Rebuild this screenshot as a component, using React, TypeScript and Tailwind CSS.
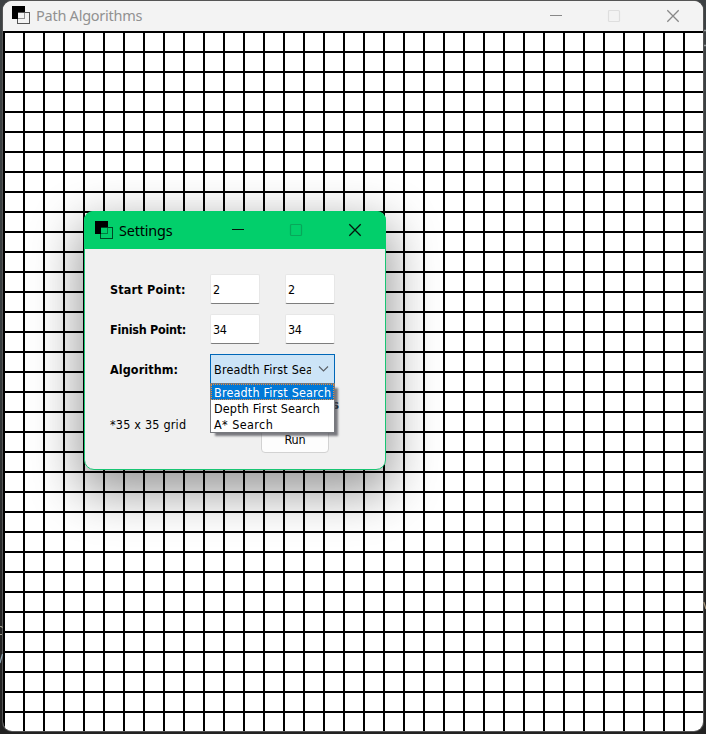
import type { ReactNode } from "react";

const UI = "font-['DejaVu_Sans_Condensed','DejaVu_Sans',sans-serif] font-stretch-condensed";
const TITLE = "font-['Noto_Sans','Open_Sans',sans-serif]";

function AppIcon() {
  return (
    <svg width="19" height="19" viewBox="0 0 19 19" className="shrink-0" shapeRendering="crispEdges">
      <path d="M0 0h13v6H6v7H0z" fill="#000" />
      <path d="M5.5 6.5h12v11h-12z" fill="none" stroke="#000" strokeOpacity="0.65" />
      <path d="M12.5 7v5.5H6" fill="none" stroke="#000" strokeOpacity="0.4" />
    </svg>
  );
}

function WindowButtons({ color, disabled }: { color: string; disabled: string }) {
  return (
    <svg width="130" height="14" viewBox="0 0 130 14" fill="none" className="shrink-0">
      <path d="M0 6.5h12" stroke={color} />
      <rect x="58.5" y="1.5" width="11" height="11" rx="1" stroke={disabled} strokeWidth="1.2" />
      <path d="M117.3 1.3l11.4 11.4M128.7 1.3l-11.4 11.4" stroke={color} strokeWidth="1.3" />
    </svg>
  );
}

function Label({ children, spacing }: { children: ReactNode; spacing: string }) {
  return <div className={`w-[100px] pt-[2px] text-[12.5px] font-bold whitespace-nowrap ${spacing}`}>{children}</div>;
}

function Field({ value }: { value: string }) {
  return (
    <input
      readOnly
      value={value}
      className="block h-[30px] w-[50px] rounded-[2px] border border-[#e7e7e7] border-b-[#7d7d7d] bg-white pl-[2px] text-[12.5px] tracking-[-0.3px] outline-none"
    />
  );
}

export default function App() {
  return (
    <div className="relative h-[734px] w-[706px] overflow-hidden bg-[linear-gradient(#3d4143_0px,#363b3d_350px,#222_600px,#222_734px)]">
      <svg className="absolute left-0 top-[620px]" width="3" height="50" fill="none" strokeWidth="1.2">
        <path d="M0 6.5h1.5l1 1.5M0 14.5h2" stroke="#9c9a8b" />
        <path d="M2.5 34L0 43" stroke="#8ca2b0" />
      </svg>
      <svg className="absolute left-[703px] top-[600px]" width="3" height="12" fill="none">
        <path d="M0.8 2L3 9" stroke="#a99a80" strokeWidth="1.2" />
      </svg>
      <svg className="absolute left-[703px] top-[28px]" width="3" height="20" fill="none">
        <path d="M1 2.5h2M1 17.5h2" stroke="#999d9f" strokeWidth="1.4" />
      </svg>
      <div className="pt-px pl-[3px]">
        <div className="h-[730px] w-[700px] overflow-hidden rounded-[9px] bg-white shadow-[0_0_0_1px_#555555]">
          <header className={`flex h-[30px] items-center bg-[#f3f3f3] pl-[9px] ${TITLE}`}>
            <span className="-mt-px"><AppIcon /></span>
            <span className="-mt-[2px] ml-[5px] w-[511px] text-[14.5px] leading-5 tracking-[-0.25px] text-[#919191]">Path Algorithms</span>
            <span className="ml-[3px]"><WindowButtons color="#888888" disabled="#dedede" /></span>
          </header>
          <main className="h-[700px] bg-[linear-gradient(#000_2px,transparent_2px),linear-gradient(90deg,#000_2px,transparent_2px)] bg-[length:20px_20px]" />
        </div>
      </div>

      <section className={`absolute left-[84px] top-[211px] h-[259px] w-[302px] rounded-[10px] border border-[#18c573] bg-[#f0f0f0] text-black shadow-[0_18px_50px_4px_rgba(0,0,0,0.42)] ${UI}`}>
        <header className={`-mx-px -mt-px flex h-[38px] items-center rounded-t-[9px] bg-[#02cf6b] pl-[11px] ${TITLE}`}>
          <AppIcon />
          <span className="ml-[5px] w-[113px] pt-px text-[14.4px] leading-5 tracking-[-0.15px]">Settings</span>
          <WindowButtons color="#05150c" disabled="#08a75a" />
        </header>
        <div className="flex flex-col gap-[10px] pl-[25px] pt-[25px]">
          <div className="flex h-[30px] items-center">
            <Label spacing="tracking-[0.18px]">Start Point:</Label>
            <div className="flex gap-[25px]"><Field value="2" /><Field value="2" /></div>
          </div>
          <div className="flex h-[30px] items-center">
            <Label spacing="tracking-[-0.28px]">Finish Point:</Label>
            <div className="flex gap-[25px]"><Field value="34" /><Field value="34" /></div>
          </div>
          <div className="flex h-[30px] items-center">
            <Label spacing="tracking-[0.08px]">Algorithm:</Label>
            <div className="relative">
              <button className="flex h-[30px] w-[125px] items-center border border-[#0067b8] bg-[#cce4f7] pl-[3px] text-left text-[12.5px]">
                <span className="w-[97px] overflow-hidden pt-[2px] tracking-[0.17px] whitespace-nowrap">Breadth First Search</span>
                <svg className="ml-[7px]" width="11" height="8" viewBox="0 0 11 8" fill="none"><path d="M1 1.5l4.5 4.5L10 1.5" stroke="#5a6067" strokeWidth="1.1" /></svg>
              </button>
              <ul className="absolute left-0 top-[29px] z-10 h-[50px] w-[125px] border border-[#77797e] bg-white text-[12.5px] leading-[18px] whitespace-nowrap shadow-[4px_4px_2px_-1px_rgba(80,80,88,0.75)]">
                <li className="h-4 bg-[#0078d7] pl-[3px] tracking-[0.17px] text-white outline-dotted outline-1 -outline-offset-1 outline-[#ed8a38]">Breadth First Search</li>
                <li className="h-4 pl-[3px] tracking-[0.14px]">Depth First Search</li>
                <li className="h-4 pl-[3px] tracking-[0.42px]">A* Search</li>
              </ul>
            </div>
          </div>
        </div>
        <div className="flex flex-col pl-[25px] pt-[13px]">
          <div className="h-4 w-[229px] text-right text-[12.5px] font-bold leading-4">s</div>
          <div className="flex h-[45px]">
            <span className="mt-[4px] w-[151px] text-[12.5px] leading-4 tracking-[0.2px]">*35 x 35 grid</span>
            <button className="mt-[12px] h-[28px] w-[68px] rounded-[4px] border border-[#d2d2d2] bg-[#fdfdfd] pt-[2px] text-[12.5px] leading-4 tracking-[-0.1px]">Run</button>
          </div>
        </div>
      </section>
    </div>
  );
}
